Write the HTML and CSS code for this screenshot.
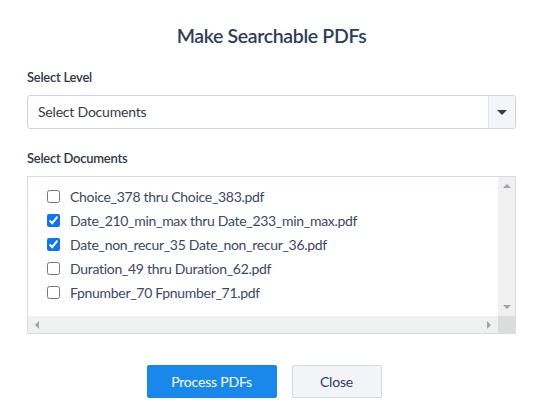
FILE: index.html
```html
<!DOCTYPE html>
<html>
<head>
<meta charset="utf-8">
<link rel="stylesheet" href="styles.css">
</head>
<body>
<div class="dialog">
  <h1 class="title">Make Searchable PDFs</h1>
  <div class="field">
    <div class="label">Select Level</div>
    <div class="select">
      <div class="select-value">Select Documents</div>
      <div class="select-arrow"><span class="tri-down"></span></div>
    </div>
  </div>
  <div class="field">
    <div class="label">Select Documents</div>
    <div class="listbox">
      <div class="list">
        <label class="item"><input type="checkbox"><span>Choice_378 thru Choice_383.pdf</span></label>
        <label class="item"><input type="checkbox" checked><span>Date_210_min_max thru Date_233_min_max.pdf</span></label>
        <label class="item"><input type="checkbox" checked><span>Date_non_recur_35 Date_non_recur_36.pdf</span></label>
        <label class="item"><input type="checkbox"><span>Duration_49 thru Duration_62.pdf</span></label>
        <label class="item"><input type="checkbox"><span>Fpnumber_70 Fpnumber_71.pdf</span></label>
      </div>
      <div class="vbar">
        <span class="sb-up"></span>
        <span class="sb-down"></span>
      </div>
      <div class="hbar">
        <span class="sb-left"></span>
        <span class="sb-right"></span>
      </div>
      <div class="corner"></div>
    </div>
  </div>
  <div class="actions">
    <button class="btn btn-primary">Process PDFs</button>
    <button class="btn btn-default">Close</button>
  </div>
</div>
</body>
</html>
```
FILE: styles.css
```css
html, body {
  margin: 0;
  padding: 0;
  background: #ffffff;
}
body {
  font-family: Lato, "Open Sans", "Liberation Sans", sans-serif;
  color: #333a44;
}
.dialog {
  width: 544px;
  height: 417px;
  box-sizing: border-box;
  padding: 24px 28px 0 27px;
}
.title {
  margin: 0;
  font-size: 19.5px;
  line-height: 24px;
  font-weight: 600;
  letter-spacing: -0.35px;
  color: #2e3d5a;
  text-align: center;
}
.field {
  display: flex;
  flex-direction: column;
}
.label {
  font-size: 13px;
  line-height: 18px;
  font-weight: 600;
  letter-spacing: -0.25px;
  color: #2f3744;
  margin-top: 20px;
  margin-bottom: 9px;
}
.select {
  display: flex;
  height: 34px;
  box-sizing: border-box;
  border: 1px solid #cfd3db;
  border-radius: 3px;
  overflow: hidden;
}
.select-value {
  flex: 1;
  padding-left: 10px;
  font-size: 14px;
  line-height: 32px;
  letter-spacing: -0.2px;
  color: #333a44;
}
.select-arrow {
  width: 26px;
  border-left: 1px solid #dfe2e8;
  background: #f4f5f9;
  display: flex;
  align-items: center;
  justify-content: center;
}
.tri-down {
  width: 0;
  height: 0;
  border-left: 5px solid transparent;
  border-right: 5px solid transparent;
  border-top: 5px solid #2e3d5a;
}
.listbox {
  height: 158px;
  box-sizing: border-box;
  border: 1px solid #d5dde6;
  display: grid;
  grid-template-columns: 1fr 17px;
  grid-template-rows: 1fr 17px;
}
.list {
  padding: 7px 0 0 19px;
  display: flex;
  flex-direction: column;
}
.item {
  display: flex;
  align-items: center;
  height: 24px;
  font-size: 14px;
  letter-spacing: -0.3px;
  color: #3a4766;
}
.item input {
  width: 13px;
  height: 13px;
  margin: 0 10px 0 0;
  accent-color: #0a75f5;
}
.vbar {
  background: #f0f0f0;
  display: flex;
  flex-direction: column;
  justify-content: space-between;
  align-items: center;
  padding: 7px 0;
}
.hbar {
  background: #f0f0f0;
  display: flex;
  justify-content: space-between;
  align-items: center;
  padding: 0 7px;
}
.corner {
  background: #dcdcdc;
}
.sb-up {
  width: 0; height: 0;
  border-left: 4px solid transparent;
  border-right: 4px solid transparent;
  border-bottom: 4px solid #a3a3a3;
}
.sb-down {
  width: 0; height: 0;
  border-left: 4px solid transparent;
  border-right: 4px solid transparent;
  border-top: 4px solid #a3a3a3;
}
.sb-left {
  width: 0; height: 0;
  border-top: 4px solid transparent;
  border-bottom: 4px solid transparent;
  border-right: 4px solid #a3a3a3;
}
.sb-right {
  width: 0; height: 0;
  border-top: 4px solid transparent;
  border-bottom: 4px solid transparent;
  border-left: 4px solid #a3a3a3;
}
.actions {
  display: flex;
  justify-content: center;
  gap: 15px;
  padding-right: 15px;
  margin-top: 31px;
}
.btn {
  height: 33px;
  box-sizing: border-box;
  border-radius: 2px;
  font-family: inherit;
  font-size: 14px;
  letter-spacing: -0.2px;
  padding: 0;
  cursor: pointer;
}
.btn-primary {
  width: 130px;
  background: #1889eb;
  border: 1px solid #1889eb;
  color: #ffffff;
}
.btn-default {
  width: 90px;
  background: #f3f4f8;
  border: 1px solid #d6d9e3;
  color: #2e3d5a;
}
```
